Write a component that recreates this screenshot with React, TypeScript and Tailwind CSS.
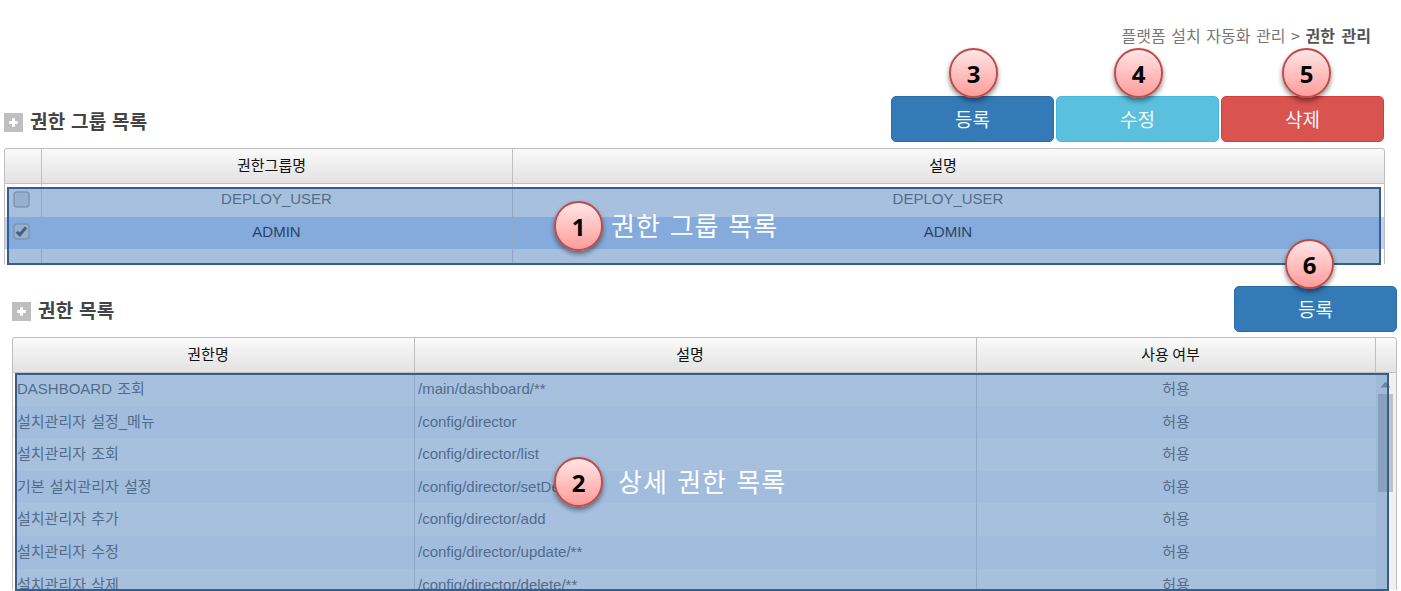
import React from "react";

const SANS = "font-['Liberation_Sans','Noto_Sans_CJK_KR',sans-serif]";
const KR = "font-['Noto_Sans_CJK_KR',sans-serif]";

const groups = [
  { name: "DEPLOY_USER", desc: "DEPLOY_USER", checked: false },
  { name: "ADMIN", desc: "ADMIN", checked: true },
];

const permissions = [
  { name: "DASHBOARD 조회", path: "/main/dashboard/**" },
  { name: "설치관리자 설정_메뉴", path: "/config/director" },
  { name: "설치관리자 조회", path: "/config/director/list" },
  { name: "기본 설치관리자 설정", path: "/config/director/setDefault" },
  { name: "설치관리자 추가", path: "/config/director/add" },
  { name: "설치관리자 수정", path: "/config/director/update/**" },
  { name: "설치관리자 삭제", path: "/config/director/delete/**" },
];

function Title({ children }: { children: React.ReactNode }) {
  return (
    <div className="flex items-center gap-[7px]">
      <svg width="19" height="19" viewBox="0 0 19 19" className="mt-[2px]">
        <rect width="19" height="19" fill="#bfbfbf" />
        <path d="M9.5 5.2v8.6M5.2 9.5h8.6" stroke="#fff" strokeWidth="3" />
      </svg>
      <h2 className={`${KR} text-[19px] leading-[24px] font-bold tracking-[0.25px] [word-spacing:1px] whitespace-nowrap text-[#444]`}>
        {children}
      </h2>
    </div>
  );
}

function Button({ className, children }: { className: string; children: React.ReactNode }) {
  return (
    <button
      className={`${KR} flex h-[46px] items-center justify-center rounded-[5px] border text-[19px] leading-[24px] text-[#f4f8fc] ${className}`}
    >
      {children}
    </button>
  );
}

function HeadCell({ className, children }: { className: string; children?: React.ReactNode }) {
  return (
    <div
      className={`${KR} flex items-center justify-center pr-[11px] pb-[2px] text-[15px] text-[#111] ${className}`}
    >
      {children}
    </div>
  );
}

function Check({ checked }: { checked: boolean }) {
  return (
    <svg width="17" height="17" viewBox="0 0 17 17">
      <rect x="1" y="1" width="15" height="15" rx="3" fill="#dedede" stroke="#a9a9a9" strokeWidth="1.5" />
      {checked && <path d="M3.8 8.8l3 3L13 4.4" fill="none" stroke="#3a3a3a" strokeWidth="3" />}
    </svg>
  );
}

function Badge({ n, className }: { n: number; className: string }) {
  return (
    <div
      className={`absolute z-20 flex h-[50px] w-[49px] items-center justify-center rounded-full border-2 border-[#be4b48] bg-linear-to-b from-[#ffe5e5] to-[#ff9c9c] pt-[1px] font-['Noto_Sans',sans-serif] text-[24px] leading-none font-bold text-black shadow-[0_3px_5px_rgba(0,0,0,0.45)] ${className}`}
    >
      {n}
    </div>
  );
}

function Region({ className }: { className: string }) {
  return <div className={`absolute z-10 border-2 border-[#385d8a] bg-[#4f81bd]/50 ${className}`} />;
}

const headBar = "flex h-[36px] shrink-0 rounded-t-[3px] border border-[#bfbfbf] bg-linear-to-b from-[#fafafa] to-[#e2e2e2]";

export default function App() {
  return (
    <div className={`relative flex h-[591px] w-[1401px] flex-col overflow-hidden bg-white ${SANS}`}>
      <nav className={`${KR} flex h-[96px] shrink-0 justify-end pt-[23px] pr-[30px] text-[16px] leading-[24px] text-[#777]`}>
        <span className="whitespace-pre [word-spacing:2px]">플랫폼 설치 자동화 관리 &gt; </span>
        <b className="text-[#555] [word-spacing:3px]">권한 관리</b>
      </nav>

      <section className="flex h-[168px] shrink-0 flex-col pr-[16px] pl-[4px]">
        <div className="flex h-[52px] shrink-0 items-start justify-between">
          <div className="pt-[13px]">
            <Title>권한 그룹 목록</Title>
          </div>
          <div className="flex gap-[2px] pr-px">
            <Button className="w-[163px] border-[#2e6da4] bg-[#337ab7]">등록</Button>
            <Button className="w-[163px] border-[#46b8da] bg-[#5bc0de]">수정</Button>
            <Button className="w-[163px] border-[#d43f3a] bg-[#d9534f]">삭제</Button>
          </div>
        </div>
        <div className={headBar}>
          <HeadCell className="w-[37px] border-r border-[#bfbfbf]" />
          <HeadCell className="w-[471px] border-r border-[#bfbfbf]">권한그룹명</HeadCell>
          <HeadCell className="flex-1">설명</HeadCell>
        </div>
        <div className="flex min-h-0 flex-1 flex-col border-x border-[#bfbfbf] text-[15px]">
          {groups.map((g) => (
            <div
              key={g.name}
              className={`flex h-[32.5px] shrink-0 ${g.checked ? "bg-[#b8d4fb] text-black" : "bg-white text-[#555]"}`}
            >
              <div className="flex w-[37px] items-center border-r border-[#d0d0d0] pb-[2px] pl-[8px]">
                <Check checked={g.checked} />
              </div>
              <div className="flex w-[471px] items-center justify-center border-r border-[#d0d0d0] pr-px pb-[2px]">{g.name}</div>
              <div className="flex flex-1 items-center justify-center pr-px pb-[2px]">{g.desc}</div>
            </div>
          ))}
          <div className="flex flex-1">
            <div className="w-[37px] border-r border-[#d0d0d0]" />
            <div className="w-[471px] border-r border-[#d0d0d0]" />
          </div>
        </div>
      </section>

      <section className="flex min-h-0 flex-1 flex-col pt-[21px] pr-[4px] pb-px pl-[12px]">
        <div className="flex h-[52px] shrink-0 items-start justify-between">
          <div className="pt-[13px]">
            <Title>권한 목록</Title>
          </div>
          <Button className="mt-px w-[163px] border-[#2e6da4] bg-[#337ab7]">등록</Button>
        </div>
        <div className={headBar}>
          <HeadCell className="w-[402px] border-r border-[#bfbfbf]">권한명</HeadCell>
          <HeadCell className="w-[562px] border-r border-[#bfbfbf]">설명</HeadCell>
          <HeadCell className="w-[399px] border-r border-[#bfbfbf]">사용 여부</HeadCell>
        </div>
        <div className="flex min-h-0 flex-1 overflow-hidden border-x border-[#bfbfbf]">
          <div className="flex w-[1363px] flex-col text-[15px] text-[#555]">
            {permissions.map((p, i) => (
              <div key={p.path} className={`flex h-[32.6px] shrink-0 ${i % 2 ? "bg-[#f3f6fa]" : "bg-white"}`}>
                <div className="flex w-[402px] items-center border-r border-[#d0d0d0] pl-[4px] [word-spacing:1px]">{p.name}</div>
                <div className="flex w-[562px] items-center border-r border-[#d0d0d0] pl-[3px]">{p.path}</div>
                <div className="flex flex-1 items-center justify-center pr-px">허용</div>
              </div>
            ))}
          </div>
          <div className="flex flex-1 flex-col items-center bg-[#f1f1f1] pr-[2px]">
            <svg width="17" height="21" viewBox="0 0 17 21" className="shrink-0">
              <path d="M3.5 14.5l5-6 5 6z" fill="#888" />
            </svg>
            <div className="h-[98px] w-[15px] bg-[#c1c1c1]" />
          </div>
        </div>
      </section>

      <Region className="top-[187px] left-[7px] h-[78px] w-[1374px]" />
      <Region className="top-[373px] left-[15px] h-[218px] w-[1374px]" />
      <div className={`${KR} absolute top-[207px] left-[611px] z-20 text-[26px] leading-[36px] tracking-[1px] [word-spacing:2px] whitespace-nowrap text-white`}>
        권한 그룹 목록
      </div>
      <div className={`${KR} absolute top-[463px] left-[618px] z-20 text-[26px] leading-[36px] tracking-[1px] [word-spacing:2.5px] whitespace-nowrap text-white`}>
        상세 권한 목록
      </div>
      <Badge n={1} className="top-[201px] left-[554px]" />
      <Badge n={2} className="top-[457px] left-[554px]" />
      <Badge n={3} className="top-[48px] left-[949px]" />
      <Badge n={4} className="top-[48px] left-[1114px]" />
      <Badge n={5} className="top-[48px] left-[1282px]" />
      <Badge n={6} className="top-[239px] left-[1285px]" />
    </div>
  );
}
